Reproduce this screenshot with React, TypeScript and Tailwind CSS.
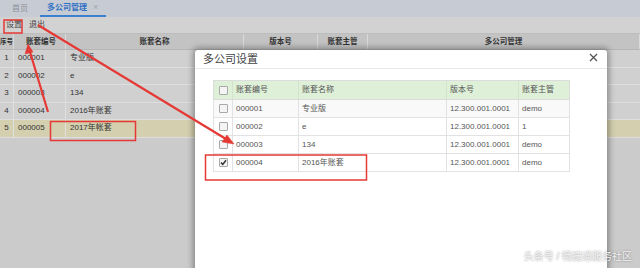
import React from 'react';

interface Account {
  no: number;
  code: string;
  name: string;
  version: string;
  manager: string;
}

const accounts: Account[] = [
  { no: 1, code: '000001', name: '专业版', version: '12.300.001.0001', manager: 'demo' },
  { no: 2, code: '000002', name: 'e', version: '12.300.001.0001', manager: '1' },
  { no: 3, code: '000003', name: '134', version: '12.300.001.0001', manager: 'demo' },
  { no: 4, code: '000004', name: '2016年账套', version: '12.300.001.0001', manager: 'demo' },
  { no: 5, code: '000005', name: '2017年帐套', version: '', manager: '' },
];

const font = { fontFamily: '"Liberation Sans", "Noto Sans CJK SC", sans-serif' };

const mainCols = 'grid grid-cols-[14px_52px_178px_74px_50px_272px]';
const dlgCols = 'grid grid-cols-[19px_66px_148px_72px_52px]';

const Checkbox: React.FC<{ checked?: boolean }> = ({ checked }) => (
  <span className="flex h-[9px] w-[9px] items-center justify-center rounded-[1px] border border-[#a8a8a8] bg-[#f4f4f4]">
    {checked && (
      <svg width="7" height="7" viewBox="0 0 7 7">
        <path d="M1 3.6 L2.8 5.4 L6 1.3" stroke="#333" strokeWidth="1.5" fill="none" />
      </svg>
    )}
  </span>
);

const App: React.FC = () => {
  return (
    <div className="relative h-[268px] w-[640px] overflow-hidden bg-[#cbcbcb] text-[#333]" style={font}>
      {/* tab bar */}
      <div className="flex h-[17px] items-end whitespace-nowrap bg-[#c7ccd4] text-[8px]">
        <div className="flex h-[16px] w-[40px] items-center justify-center text-[#8a8f98]">首页</div>
        <div className="flex h-[16px] w-[66px] items-center gap-[6px] border-b-2 border-[#3b7fd0] pl-[7px] font-bold text-[#2f6fc4]">
          多公司管理
          <span className="text-[9px] font-normal text-[#a0a6b0]">×</span>
        </div>
      </div>

      {/* toolbar */}
      <div className="flex h-[17px] items-center gap-[7px] whitespace-nowrap border-b border-[#bdbdbd] bg-[#d2d2d2] pl-[6px] text-[8px] text-[#444]">
        <span>设置</span>
        <span>退出</span>
      </div>

      {/* main table */}
      <div className={`${mainCols} h-[16px] whitespace-nowrap border-b border-[#b5b5b5] bg-[#c3c3c3] text-[7.5px] font-bold text-[#333]`}>
        <div className="flex items-center border-r border-[#dadada] text-[6.5px]">序号</div>
        {['账套编号', '账套名称', '版本号', '账套主管', '多公司管理'].map((h, i) => (
          <div
            key={h}
            className={`flex items-center border-r border-[#dadada] ${i === 0 ? 'pl-[12px]' : 'justify-center'}`}
          >
            {h}
          </div>
        ))}
      </div>
      {accounts.map(a => (
        <div
          key={a.no}
          className={`${mainCols} h-[17.5px] border-b border-[#dedede] text-[8px] ${a.no === 5 ? 'bg-[#d4cfae]' : 'bg-[#d0d0d0]'}`}
        >
          <div className="flex items-center justify-center border-r border-[#e0e0e0]">{a.no}</div>
          <div className="flex items-center border-r border-[#e0e0e0] pl-[4px]">{a.code}</div>
          <div className="flex items-center border-r border-[#e0e0e0] pl-[4px]">{a.name}</div>
          <div className="border-r border-[#e0e0e0]" />
          <div className="border-r border-[#e0e0e0]" />
          <div />
        </div>
      ))}

      {/* dialog */}
      <div className="absolute left-[195px] top-[50px] h-[230px] w-[412px] rounded-t-[3px] bg-white shadow-[0_0_6px_2px_rgba(0,0,0,0.35)]">
        <div className="flex h-[19px] items-center justify-between border-b border-[#e8e8e8] pl-[8px] pr-[9px]">
          <span className="text-[11px] text-[#444]">多公司设置</span>
          <svg width="9" height="9" viewBox="0 0 9 9" className="mt-[-3px]">
            <path d="M1 1 L8 8 M8 1 L1 8" stroke="#555" strokeWidth="1.3" />
          </svg>
        </div>
        <div className="ml-[18px] mt-[11px] w-[357px] text-[8px] text-[#555]">
          <div className={`${dlgCols} h-[20px] border border-[#dcdcdc] bg-[#dff0d8]`}>
            <div className="flex items-center justify-center border-r border-[#d4e4cc]">
              <Checkbox />
            </div>
            <div className="flex items-center border-r border-[#d4e4cc] pl-[3px]">账套编号</div>
            <div className="flex items-center border-r border-[#d4e4cc] pl-[3px]">账套名称</div>
            <div className="flex items-center border-r border-[#d4e4cc] pl-[3px]">版本号</div>
            <div className="flex items-center pl-[3px]">账套主管</div>
          </div>
          {accounts.slice(0, 4).map(a => (
            <div
              key={a.no}
              className={`${dlgCols} h-[18px] border border-t-0 border-[#e2e2e2] ${a.no === 1 ? 'bg-[#f9f9f9]' : 'bg-white'}`}
            >
              <div className="flex items-center justify-center border-r border-[#e2e2e2]">
                <Checkbox checked={a.no === 4} />
              </div>
              <div className="flex items-center border-r border-[#e2e2e2] pl-[3px]">{a.code}</div>
              <div className="flex items-center border-r border-[#e2e2e2] pl-[3px]">{a.name}</div>
              <div className="flex items-center border-r border-[#e2e2e2] pl-[3px]">{a.version}</div>
              <div className="flex items-center pl-[3px]">{a.manager}</div>
            </div>
          ))}
        </div>
      </div>

      {/* annotations */}
      <svg className="pointer-events-none absolute left-0 top-0" width="640" height="268" viewBox="0 0 640 268">
        <g fill="none" stroke="#e53935" strokeWidth="1.5">
          <rect x="4" y="20" width="18" height="13" />
          <rect x="50.5" y="121.5" width="85" height="19" />
          <rect x="205.5" y="155" width="161" height="25" />
        </g>
        <g stroke="#e53935" strokeWidth="2.2" fill="#e53935">
          <line x1="48" y1="112" x2="30" y2="52" />
          <polygon points="28,44 25,54 33,52" strokeWidth="0.5" />
          <line x1="38" y1="25" x2="226" y2="139" />
          <polygon points="234,144 222,142 227,135" strokeWidth="0.5" />
        </g>
      </svg>

      {/* watermark */}
      <div className="absolute bottom-[4px] right-[8px] text-[10px] text-[#f4f4f4] [text-shadow:0_0_2px_rgba(0,0,0,0.45)]">
        头条号 / 畅捷通服务社区
      </div>
    </div>
  );
};

export default App;
